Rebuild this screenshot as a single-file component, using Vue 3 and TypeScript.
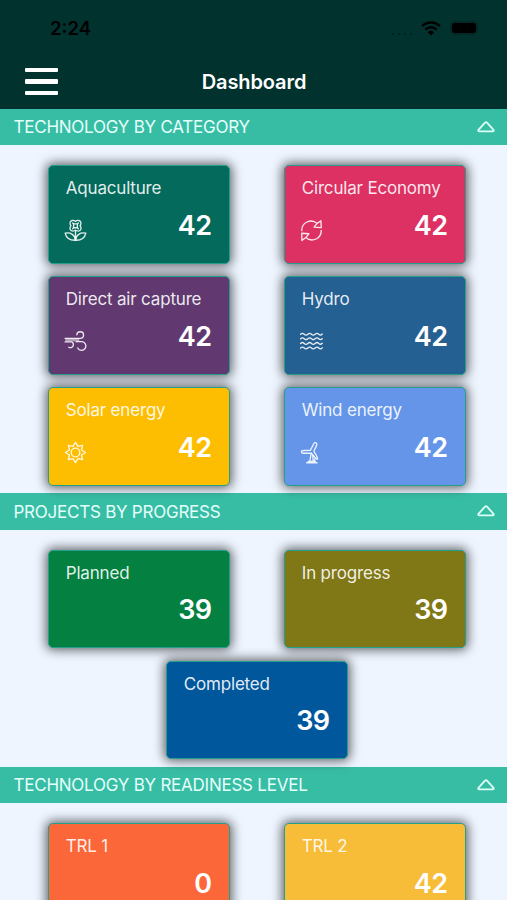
<script setup lang="ts">
interface Card {
  label: string
  value: number
  color: string
  icon?: 'flower' | 'cycle' | 'air' | 'waves' | 'sun' | 'turbine'
}
interface Section {
  title: string
  cards: Card[]
}

const sections: Section[] = [
  {
    title: 'TECHNOLOGY BY CATEGORY',
    cards: [
      { label: 'Aquaculture', value: 42, color: '#046a5c', icon: 'flower' },
      { label: 'Circular Economy', value: 42, color: '#dd3163', icon: 'cycle' },
      { label: 'Direct air capture', value: 42, color: '#613970', icon: 'air' },
      { label: 'Hydro', value: 42, color: '#246091', icon: 'waves' },
      { label: 'Solar energy', value: 42, color: '#fdbe02', icon: 'sun' },
      { label: 'Wind energy', value: 42, color: '#6495e9', icon: 'turbine' },
    ],
  },
  {
    title: 'PROJECTS BY PROGRESS',
    cards: [
      { label: 'Planned', value: 39, color: '#048141' },
      { label: 'In progress', value: 39, color: '#807716' },
      { label: 'Completed', value: 39, color: '#01579c' },
    ],
  },
  {
    title: 'TECHNOLOGY BY READINESS LEVEL',
    cards: [
      { label: 'TRL 1', value: 0, color: '#fc673a' },
      { label: 'TRL 2', value: 42, color: '#f7bc38' },
    ],
  },
]
</script>

<template>
  <div class="screen">
    <header class="header">
      <div class="status">
        <span class="time">2:24</span>
        <div class="indicators">
          <span class="dots"><i v-for="n in 4" :key="n"></i></span>
          <svg class="wifi" viewBox="0 0 20 15" width="20" height="15">
            <path d="M1.2 5.2a12.6 12.6 0 0 1 17.6 0M4.4 8.6a8 8 0 0 1 11.2 0" fill="none" stroke="#000" stroke-width="2.5" />
            <path d="M6.9 11.2a4.5 4.5 0 0 1 6.2 0L10 14.6z" />
          </svg>
          <span class="battery"></span>
        </div>
      </div>
      <div class="nav">
        <button class="menu" aria-label="Menu"><i></i><i></i><i></i></button>
        <h1>Dashboard</h1>
      </div>
    </header>

    <section v-for="section in sections" :key="section.title">
      <div class="bar">
        <h2>{{ section.title }}</h2>
        <svg class="caret" viewBox="0 0 18 12" width="18" height="12">
          <path d="M8 1.7 1.7 8.6Q.5 10.2 2.4 10.3H15.6Q17.5 10.2 16.3 8.6L10 1.7Q9 .8 8 1.7Z" />
        </svg>
      </div>
      <div class="cards">
        <article v-for="card in section.cards" :key="card.label" class="card" :style="{ backgroundColor: card.color }">
          <h3>{{ card.label }}</h3>
          <div class="row">
            <svg v-if="card.icon" class="icon" viewBox="0 0 24 24" width="23" height="23">
              <g v-if="card.icon === 'flower'">
                <path d="M12 2.5C10 .7 6.2 1.2 6.3 4.3C6.3 5.6 6.6 6.3 7.2 7C5.4 9 6 12.6 9 12.6C10.3 12.6 11.2 12.4 12 11.6C12.8 12.4 13.7 12.6 15 12.6C18 12.6 18.6 9 16.8 7C17.4 6.3 17.7 5.6 17.7 4.3C17.8 1.2 14 .7 12 2.5Z" />
                <rect x="10" y="5.1" width="4" height="4" rx=".7" />
                <path d="M10 5.1 9 4.1M14 5.1l1-1M10 9.1l-1 1M14 9.1l1 1M12 11.8V22.2" />
                <path d="M12 22.2C5.4 22.4 2.3 19.8 1.2 14.8C7 13.7 11.6 16.6 12 22.2C12.4 16.6 17 13.7 22.8 14.8C21.7 19.8 18.6 22.4 12 22.2Z" />
              </g>
              <g v-else-if="card.icon === 'cycle'">
                <path d="M1.9 12.2C1.5 3.8 11.3-1 18 4.6L21.8 1.8 22.2 9 14.7 8.4 18 4.6" />
                <path d="M22.1 11.8C22.5 20.2 12.7 25 6 19.4L2 22.5 1.8 14.9 9.3 15.4 6 19.4" />
              </g>
              <g v-else-if="card.icon === 'air'" class="fine">
                <path class="stream" d="M1.4 10.3H16" />
                <path d="M1.2 12.4H8.2A3.2 3.2 0 1 1 5 18" />
                <path d="M1.2 8.8H17A3.5 3.5 0 1 0 13.4 5" />
                <path d="M12.6 12.2H18.6A4.5 4.5 0 1 1 14.3 18.8" />
              </g>
              <g v-else-if="card.icon === 'waves'" class="water">
                <path v-for="y in [4.4, 9.2, 14, 18.8]" :key="y" :d="`M.6 ${y}q2-1.9 3.8 0t3.8 0t3.8 0t3.8 0t3.8 0t3.6-.2`" />
              </g>
              <g v-else-if="card.icon === 'sun'">
                <path d="M12 1.5 14.6 5.7 19.4 4.6 18.3 9.4 22.5 12 18.3 14.6 19.4 19.4 14.6 18.3 12 22.5 9.4 18.3 4.6 19.4 5.7 14.6 1.5 12 5.7 9.4 4.6 4.6 9.4 5.7Z" />
                <circle cx="12" cy="12" r="4.5" />
              </g>
              <g v-else>
                <path d="M10.9 9.7 14.5 2.6Q15.4 1.2 16.8 2Q18 2.9 17.4 4.3L14.5 10.8Q17.6 15.2 18.4 18.4Q18.1 19.4 17 18.8L11.8 12.6 3.1 12.8Q1.2 12.2 1.5 10.8Q2 9.9 3.5 9.9Z" />
                <path d="M11.6 13 10.2 21.4H13.8L13.3 14.8M8.6 22.6V21.3H16V22.6M7 22.7H17.8M15.2 19V22" />
              </g>
            </svg>
            <strong>{{ card.value }}</strong>
          </div>
        </article>
      </div>
    </section>
  </div>
</template>

<style>
body {
  overflow: hidden;
}
</style>

<style scoped>
.screen {
  height: 900px;
  overflow: hidden;
  background: #eef5ff;
  color: #fff;
  font-family: Inter, "Liberation Sans", sans-serif;
}
h1, h2, h3 {
  margin: 0;
  white-space: nowrap;
}
.header {
  height: 108.5px;
  background: #01322e;
}
.status {
  display: flex;
  align-items: center;
  justify-content: space-between;
  height: 56px;
  padding: 0 27px 0 50px;
  color: #000;
}
.time {
  font-size: 18.5px;
  font-weight: 600;
}
.indicators {
  display: flex;
  align-items: center;
}
.dots {
  display: flex;
  gap: 4px;
  margin: 11px 9px 0 0;
}
.dots i {
  width: 2px;
  height: 2px;
  border-radius: 50%;
  background: #011f1d;
}
.wifi {
  margin-right: 11px;
}
.battery {
  width: 24px;
  height: 10px;
  margin-right: 4px;
  border-radius: 3px;
  background: #000;
  box-shadow: 0 0 0 2px #012824;
}
.nav {
  display: grid;
  grid-template-columns: 1fr auto 1fr;
  align-items: center;
  height: 51px;
  padding: 0 24px 0 25px;
}
.menu {
  display: flex;
  flex-direction: column;
  gap: 7px;
  width: 33px;
  padding: 0;
  border: 0;
  background: none;
}
.menu i {
  width: 33px;
  height: 4.3px;
  border-radius: 1px;
  background: #fff;
}
h1 {
  padding-top: 1px;
  font-size: 20px;
  font-weight: 600;
  letter-spacing: -0.1px;
}
.bar {
  display: flex;
  align-items: center;
  justify-content: space-between;
  height: 36.5px;
  padding: 0 12px 0 13.5px;
  background: #38bda5;
}
h2 {
  padding-top: 1px;
  color: #e5fffb;
  font-size: 17px;
  font-weight: 400;
  letter-spacing: -0.24px;
}
.caret {
  fill: none;
  stroke: #dcfff8;
  stroke-width: 1.8;
  stroke-linejoin: round;
}
.cards {
  display: flex;
  flex-wrap: wrap;
  justify-content: center;
  gap: 12.5px 53.5px;
  padding: 20px 40px 7.5px 47px;
}
.card {
  box-sizing: border-box;
  width: 182.5px;
  height: 98.5px;
  padding: 11px 18px 0 17px;
  border: 1px solid #249f8c;
  border-radius: 5px;
  box-shadow: 0 0 11px 2px rgba(0, 0, 0, 0.6);
}
h3 {
  color: rgba(255, 255, 255, 0.9);
  font-size: 17px;
  font-weight: 400;
  line-height: 22px;
  letter-spacing: -0.18px;
}
.row {
  display: flex;
  align-items: center;
  height: 53px;
}
.icon {
  margin: 9px 0 0 -1.5px;
  fill: none;
  stroke: rgba(255, 255, 255, 0.88);
  stroke-width: 1.4;
  stroke-linejoin: round;
  stroke-linecap: round;
}
.stream {
  stroke-width: 3;
  stroke-linecap: butt;
  opacity: 0.6;
}
strong {
  margin-left: auto;
  font-size: 27px;
  font-weight: 600;
  line-height: 32px;
  letter-spacing: -0.7px;
}
</style>
